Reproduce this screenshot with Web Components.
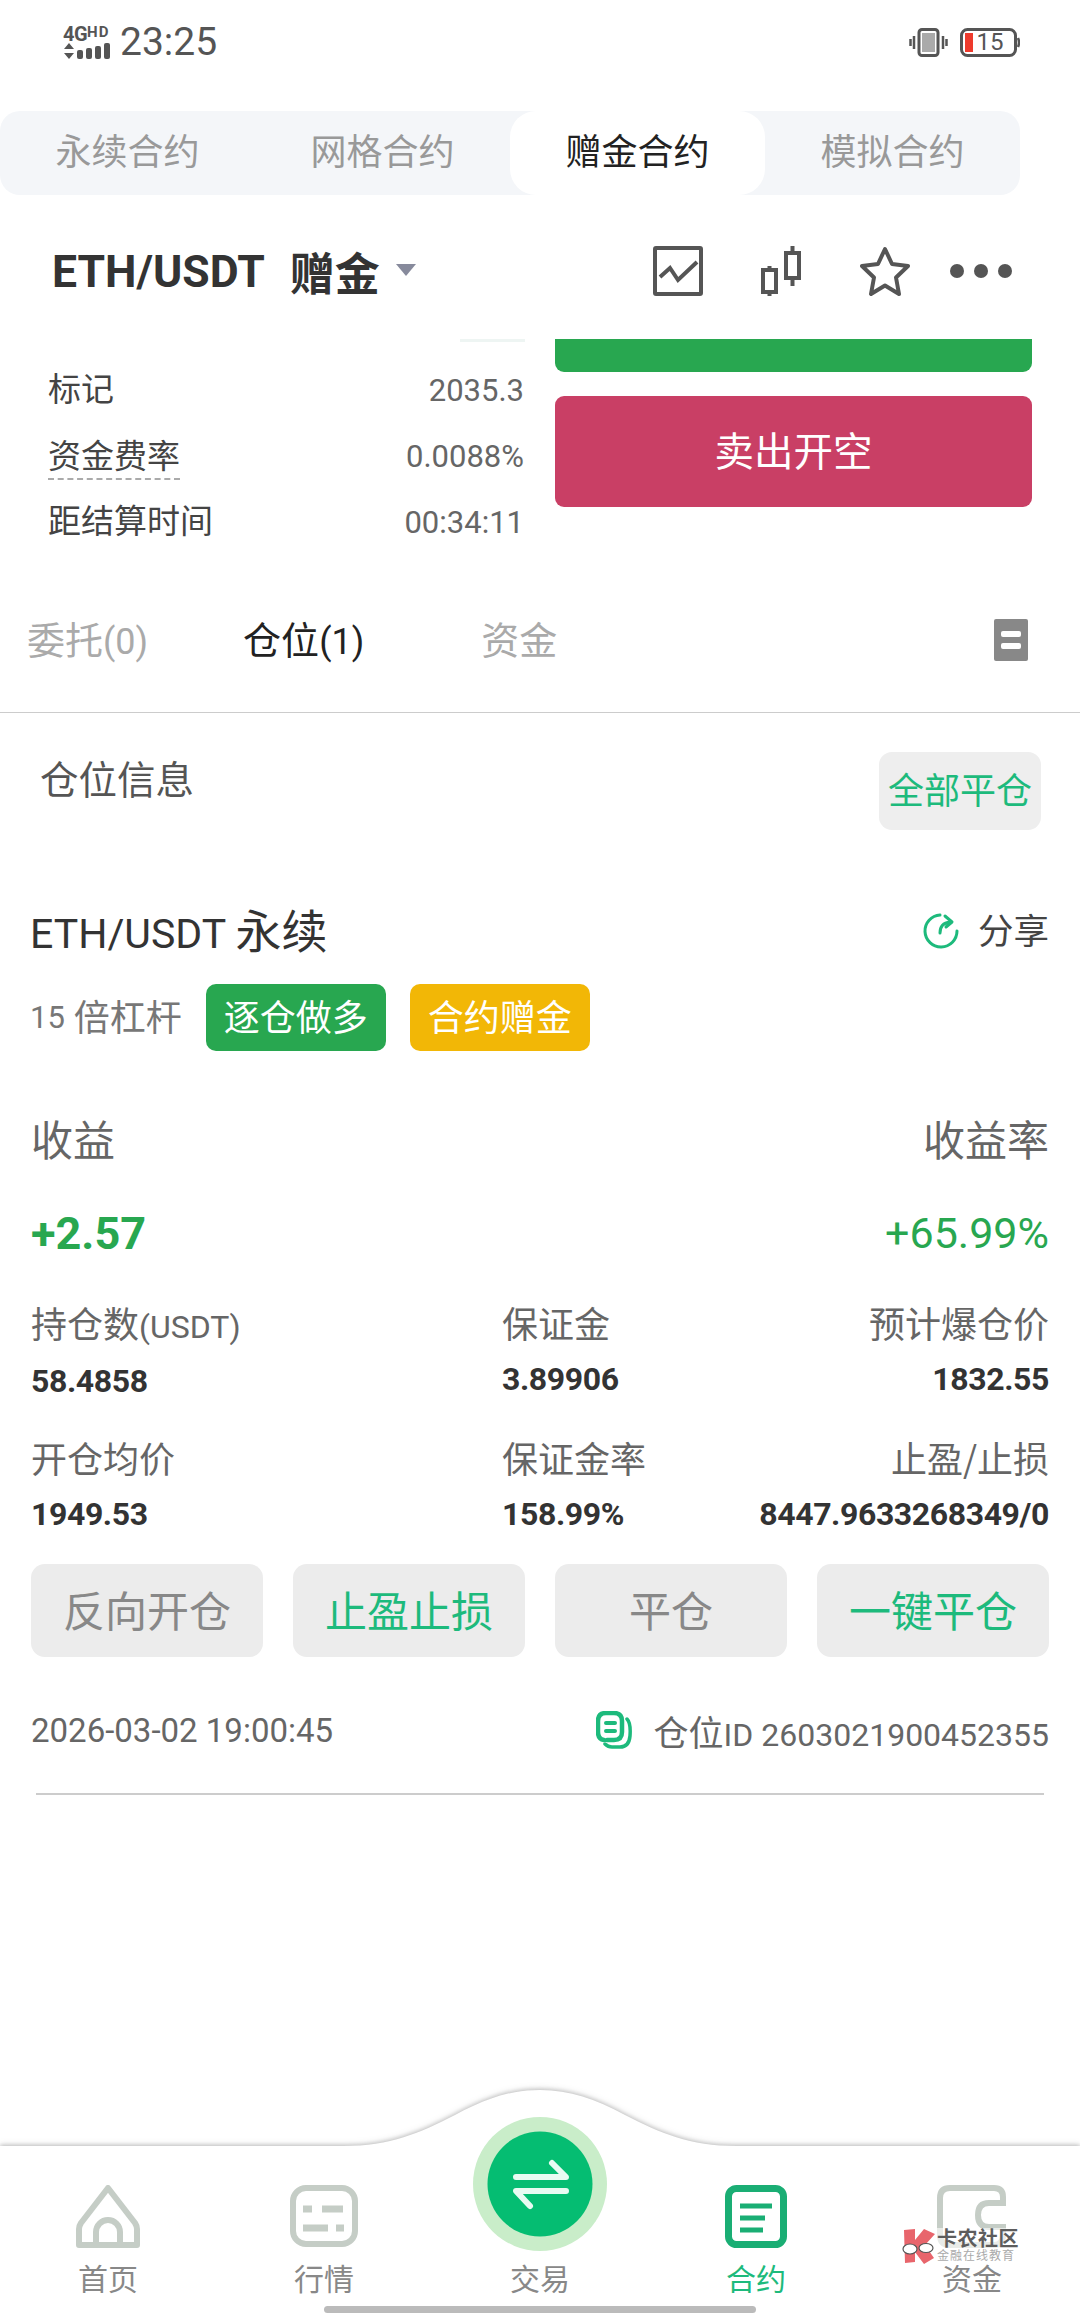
<!DOCTYPE html>
<html lang="zh">
<head>
<meta charset="utf-8">
<style>
  html, body { margin: 0; background: #fff; }
  body { font-family: Roboto, "Noto Sans CJK SC", sans-serif; }
  #page { display: flex; flex-direction: column; width: 1080px; height: 2316px; overflow: hidden; position: relative; }
  nav-bar { margin-top: auto; }
  svg { display: block; }
</style>
</head>
<body>
<div id="page">
  <status-bar></status-bar>
  <contract-tabs></contract-tabs>
  <pair-header></pair-header>
  <trade-panel></trade-panel>
  <order-tabs></order-tabs>
  <info-head></info-head>
  <position-card></position-card>
  <nav-bar>
    <nav-item label="首页">
      <svg slot="icon" width="64" height="63" viewBox="0 0 64 63" fill="none" stroke="#c5cdc6" stroke-width="6" stroke-linejoin="round">
        <path d="M32 3 L5 38 Q3 41 3 44 V60 H61 V44 Q61 41 59 38 Z"/>
        <path d="M20 60 V47 A12 12 0 0 1 44 47 V60"/>
      </svg>
    </nav-item>
    <nav-item label="行情">
      <svg slot="icon" width="68" height="63" viewBox="0 0 68 63" fill="none" stroke="#c5cdc6">
        <rect x="3" y="3" width="62" height="56" rx="13" stroke-width="6"/>
        <path d="M13 24 H22 M32 24 H53 M13 43 H38 M46 43 H54" stroke-width="7"/>
      </svg>
    </nav-item>
    <nav-item label="交易" center>
      <svg slot="icon" width="134" height="134" viewBox="0 0 134 134">
        <circle cx="67" cy="67" r="67" fill="#c9edc9"/>
        <circle cx="67" cy="67" r="52.500" fill="#05bd72"/>
        <path d="M43 60 H93 L79 46 M93 74 H43 L57 89" fill="none" stroke="#e8fbf2" stroke-width="6" stroke-linecap="round" stroke-linejoin="round"/>
      </svg>
    </nav-item>
    <nav-item label="合约" active>
      <svg slot="icon" width="62" height="63" viewBox="0 0 62 63" fill="none" stroke="#1aae74">
        <rect x="3.500" y="3.500" width="55" height="56" rx="8" stroke-width="7"/>
        <path d="M15 21 H47 M15 33 H40 M15 45 H38" stroke-width="5"/>
      </svg>
    </nav-item>
    <nav-item label="资金">
      <svg slot="icon" width="70" height="63" viewBox="0 0 70 63" fill="none" stroke="#c5cdc6" stroke-width="6">
        <path d="M66 18 V12 Q66 3 57 3 H13 Q3 3 3 13 V50 Q3 60 13 60 H57 Q66 60 66 50 V43"/>
        <path d="M69 18 H52 Q41 18 41 30 Q41 42 52 42 H69"/>
      </svg>
    </nav-item>
  </nav-bar>
  <water-mark></water-mark>
</div>

<script>
// tiny helper: every element just gets a shadow root from a string
function shadow(el, css, html) {
  el.attachShadow({mode: 'open'}).innerHTML = `<style>${css}</style>${html}`;
}

customElements.define('status-bar', class extends HTMLElement {
  connectedCallback() {
    shadow(this, `
      :host { display: flex; align-items: center; height: 84px; margin-bottom: 27px; padding: 0 60px 0 63px; color: #555; }
      .net { display: flex; flex-direction: column; width: 48px; margin-right: 9px; }
      .g { font: 700 20px/17px Roboto, sans-serif; white-space: nowrap; letter-spacing: -.5px; }
      .g small { font-size: 15px; vertical-align: 4px; letter-spacing: 1px; }
      .time { font: 400 39px/1 Roboto, sans-serif; }
      .right { margin-left: auto; display: flex; align-items: center; gap: 12px; }
      .bat { display: flex; align-items: center; position: relative; }
      .bat b { position: absolute; left: 12px; right: 12px; top: 0; bottom: 0; font: 400 24px/29px Roboto, sans-serif; text-align: center; }
    `, `
      <div class="net">
        <div class="g">4G<small>HD</small></div>
        <svg width="48" height="17" viewBox="0 0 48 17" fill="#555">
          <path d="M1 6 L6 0 L11 6 Z M1 10 H11 L6 16 Z"/>
          <rect x="14" y="7" width="6" height="9" rx="2"/><rect x="23" y="5" width="6" height="11" rx="2"/>
          <rect x="32" y="3" width="6" height="13" rx="2"/><rect x="41" y="0" width="6" height="16" rx="2"/>
        </svg>
      </div>
      <div class="time">23:25</div>
      <div class="right">
        <svg width="39" height="29" viewBox="0 0 39 29" fill="none">
          <rect x="10" y="1.500" width="19" height="26" rx="3" stroke="#555" stroke-width="3"/>
          <rect x="13" y="5" width="13" height="19" fill="#aaa"/>
          <path d="M5 8 V21 M1.500 11 V18 M34 8 V21 M37.500 11 V18" stroke="#555" stroke-width="2.500"/>
        </svg>
        <div class="bat">
          <svg width="60" height="29" viewBox="0 0 60 29" fill="none">
            <rect x="1.500" y="1.500" width="54" height="26" rx="6" stroke="#555" stroke-width="3"/>
            <rect x="5" y="5" width="8" height="19" fill="#ee3a2c"/>
            <path d="M58 10 Q60 14.500 58 19" stroke="#555" stroke-width="2.500"/>
          </svg>
          <b>15</b>
        </div>
      </div>
    `);
  }
});

customElements.define('contract-tabs', class extends HTMLElement {
  connectedCallback() {
    const names = ['永续合约', '网格合约', '赠金合约', '模拟合约'];
    shadow(this, `
      :host { display: grid; grid-template-columns: repeat(4, 255px); width: 1020px; height: 84px; background: #f4f6f9; border-radius: 20px; }
      div { display: flex; align-items: center; justify-content: center; padding-bottom: 8px; box-sizing: border-box; font: 400 36px "Noto Sans CJK SC", sans-serif; color: #999; }
      .on { background: #fff; color: #222; border-radius: 26px; }
    `, names.map((n, i) => `<div class="${i == 2 ? 'on' : ''}">${n}</div>`).join(''));
  }
});

customElements.define('pair-header', class extends HTMLElement {
  connectedCallback() {
    shadow(this, `
      :host { display: flex; align-items: center; height: 134px; padding: 10px 68px 0 52px; color: #333; }
      .sym { font: 700 44.500px Roboto, sans-serif; }
      .gift { font: 700 45px "Noto Sans CJK SC", sans-serif; margin: 0 0 2px 25px; }
      .caret { width: 0; height: 0; margin: 0 0 4px 16px; border: 10px solid transparent; border-top: 12px solid #878a9c; border-bottom: 0; }
      .icons { margin: 0 0 2px auto; display: flex; align-items: center; }
      svg { display: block; fill: none; stroke: #555; stroke-width: 4; }
    `, `
      <span class="sym">ETH/USDT</span><span class="gift">赠金</span><span class="caret"></span>
      <div class="icons">
        <svg width="50" height="50" viewBox="0 0 50 50" style="margin-right:58px">
          <rect x="2" y="2" width="46" height="46" rx="1"/><path d="M7 31 L17 22 L25 34 L44 16"/>
        </svg>
        <svg width="40" height="50" viewBox="0 0 40 50" style="margin-right:59px">
          <rect x="2" y="24" width="13" height="22"/><rect x="25" y="7" width="13" height="25"/>
          <path d="M8.500 20 V24 M8.500 46 V50 M31.500 0 V7 M31.500 32 V40"/>
        </svg>
        <svg width="50" height="50" viewBox="0 0 50 50" style="margin-right:40px" stroke-linejoin="round">
          <path d="M25 3 L32 18 L48 20 L36 31.500 L39 48 L25 39.500 L11 48 L14 31.500 L2 20 L18 18 Z"/>
        </svg>
        <svg width="62" height="14" viewBox="0 0 62 14" style="fill:#555;stroke:none">
          <circle cx="7" cy="7" r="7"/><circle cx="31" cy="7" r="7"/><circle cx="55" cy="7" r="7"/>
        </svg>
      </div>
    `);
  }
});

customElements.define('trade-panel', class extends HTMLElement {
  connectedCallback() {
    const rows = [['标记', '2035.3'], ['资金费率', '0.0088%', 1], ['距结算时间', '00:34:11']];
    shadow(this, `
      :host { display: flex; height: 241px; padding-left: 48px; overflow: hidden; }
      .left { width: 476px; margin-right: 31px; }
      .strip { width: 65px; height: 3px; margin: 0 0 15px 412px; background: #eef5f3; }
      .row { display: flex; justify-content: space-between; align-items: center; height: 66px; }
      .k { margin-bottom: 6px; font: 400 33px "Noto Sans CJK SC", sans-serif; color: #444; }
      .k.dot { border-bottom: 2px dashed #aaa; line-height: 44px; margin: 0; padding-bottom: 2px; }
      .v { font: 400 31px Roboto, sans-serif; color: #666; }
      .right { width: 477px; }
      .buy { height: 33px; background: #28a750; border-radius: 0 0 9px 9px; }
      .sell { display: flex; align-items: center; justify-content: center; box-sizing: border-box; height: 111px; padding-bottom: 6px; margin-top: 24px; background: #c93f65; border-radius: 9px; color: #fff; font: 400 39.500px "Noto Sans CJK SC", sans-serif; }
    `, `
      <div class="left">
        <div class="strip"></div>
        ${rows.map(r => `<div class="row"><span class="k ${r[2] ? 'dot' : ''}">${r[0]}</span><span class="v">${r[1]}</span></div>`).join('')}
      </div>
      <div class="right"><div class="buy"></div><div class="sell">卖出开空</div></div>
    `);
  }
});

customElements.define('order-tabs', class extends HTMLElement {
  connectedCallback() {
    shadow(this, `
      :host { display: flex; align-items: center; height: 119px; padding: 0 52px 13px 27px; border-bottom: 1.500px solid #ccc; color: #aaa; font: 400 38px "Noto Sans CJK SC", sans-serif; }
      span { margin-bottom: 5px; }
      span small { font: 400 36px Roboto, sans-serif; }
      .on { color: #222; margin-left: 95px; margin-right: 117px; }
      i { margin-left: auto; display: flex; flex-direction: column; justify-content: center; gap: 6px; width: 34px; height: 42px; padding: 0 7px; box-sizing: border-box; background: #888; border-radius: 2px; }
      i::before, i::after { content: ""; height: 6px; background: #fff; border-radius: 2px; }
    `, `<span>委托<small>(0)</small></span><span class="on">仓位<small>(1)</small></span><span>资金</span><i></i>`);
  }
});

customElements.define('info-head', class extends HTMLElement {
  connectedCallback() {
    shadow(this, `
      :host { display: flex; justify-content: space-between; align-items: flex-start; height: 78px; padding: 39px 39px 0 40px; }
      .t { font: 400 38.500px/50px "Noto Sans CJK SC", sans-serif; color: #555; }
      .b { display: flex; align-items: center; justify-content: center; box-sizing: border-box; width: 162px; height: 78px; padding-bottom: 7px; background: #eee; border-radius: 13px; color: #1dba7c; font: 400 36px "Noto Sans CJK SC", sans-serif; }
    `, `<span class="t">仓位信息</span><span class="b">全部平仓</span>`);
  }
});

customElements.define('position-card', class extends HTMLElement {
  connectedCallback() {
    const cjk = '"Noto Sans CJK SC", sans-serif';
    const cells = [
      ['持仓数<small>(USDT)</small>', '58.4858'], ['保证金', '3.89906'], ['预计爆仓价', '1832.55'],
      ['开仓均价', '1949.53'], ['保证金率', '158.99%'], ['止盈/止损', '8447.9633268349/0']
    ];
    shadow(this, `
      :host { display: block; padding: 0 31px; font-family: Roboto, ${cjk}; }
      .title { display: flex; align-items: center; justify-content: space-between; height: 60px; margin-top: 68px; color: #333; }
      .title b { font: 400 41px Roboto, sans-serif; margin-left: -1px; }
      .title b span { font: 400 46px ${cjk}; }
      .share { display: flex; align-items: center; gap: 19px; font: 400 35.500px ${cjk}; color: #444; }
      .share svg { margin-top: 6px; }
      .lev { display: flex; align-items: center; height: 67px; margin-top: 26px; margin-left: -1px; color: #777; font: 400 36px ${cjk}; }
      .lev small { font: 400 31px Roboto, sans-serif; margin-right: 9px; }
      .lev span, .tag { padding-bottom: 5px; box-sizing: border-box; }
      .tag { display: flex; align-items: center; justify-content: center; width: 180px; height: 67px; border-radius: 10px; color: #fff; margin-left: 24px; font-size: 36px; }
      .lev span + .tag { margin-left: 24px; }
      .pair { display: flex; justify-content: space-between; }
      .lbl { height: 56px; margin-top: 58px; align-items: center; color: #666; font: 400 42px ${cjk}; }
      .pnl { height: 60px; margin-top: 38px; align-items: center; color: #28a750; font: 400 43px Roboto, sans-serif; }
      .pnl b { font-size: 45px; }
      .grid { display: grid; grid-template-columns: 471px 1fr auto; row-gap: 34px; margin-top: 37px; }
      .c:nth-child(3n) { text-align: right; }
      .c div { font: 400 36px/44px ${cjk}; color: #666; }
      .c small { font: 400 32px Roboto, sans-serif; }
      .c b { display: block; margin-top: 15px; font: 700 32px/40px Roboto, sans-serif; color: #333; letter-spacing: -.4px; }
      .btns { display: grid; grid-template-columns: repeat(4, 232px); gap: 30px; margin-top: 30px; }
      .btns div { display: flex; align-items: center; justify-content: center; box-sizing: border-box; height: 93px; padding-bottom: 5px; background: #ececec; border-radius: 14px; color: #888; font: 400 42px ${cjk}; }
      .btns .g { color: #1dba7c; }
      .foot { display: flex; align-items: center; height: 60px; margin-top: 43px; color: #666; font: 400 33px Roboto, sans-serif; }
      .foot svg { margin: 0 22px 0 auto; }
      .foot span { font: 400 35px ${cjk}; }
      .foot span em { font: 400 32px Roboto, sans-serif; }
      hr { height: 1.500px; margin: 33px 5px 0; background: #ccc; border: 0; }
      svg { display: block; }
    `, `
      <div class="title">
        <b>ETH/USDT <span>永续</span></b>
        <div class="share">
          <svg width="36" height="36" viewBox="0 0 36 36" fill="none" stroke="#1dba7c" stroke-width="3" stroke-linecap="round" stroke-linejoin="round">
            <path d="M17 2 A16 16 0 1 0 34 18"/>
            <path d="M17 20 Q17 10 27 9 M22 3 L29 9 L23 14"/>
          </svg>
          分享
        </div>
      </div>
      <div class="lev">
        <small>15</small><span>倍杠杆</span>
        <div class="tag" style="background:#28a750">逐仓做多</div>
        <div class="tag" style="background:#f2b706">合约赠金</div>
      </div>
      <div class="pair lbl"><span>收益</span><span>收益率</span></div>
      <div class="pair pnl"><b>+2.57</b><span>+65.99%</span></div>
      <div class="grid">
        ${cells.map(c => `<div class="c"><div>${c[0]}</div><b>${c[1]}</b></div>`).join('')}
      </div>
      <div class="btns">
        <div>反向开仓</div><div class="g">止盈止损</div><div>平仓</div><div class="g">一键平仓</div>
      </div>
      <div class="foot">
        2026-03-02 19:00:45
        <svg width="36" height="38" viewBox="0 0 36 38" fill="none" stroke="#1dba7c" stroke-linecap="round">
          <path d="M8 29 Q2 28 2 21 V10 Q2 2 10 2 H18 Q26 2 26 10 V21 Q26 29 18 29 H11" stroke-width="4.500"/>
          <path d="M10 12 H19 M10 20 H19" stroke-width="4"/>
          <path d="M31 8 Q35 12 34 25 Q33 36 24 36 H16 Q12 36 9 33" stroke-width="3.500"/>
        </svg>
        <span>仓位<em>ID 2603021900452355</em></span>
      </div>
      <hr>
    `);
  }
});

customElements.define('nav-bar', class extends HTMLElement {
  connectedCallback() {
    shadow(this, `
      :host { display: block; position: relative; height: 231px; }
      .hump { position: absolute; left: 0; top: 0; filter: drop-shadow(0 -1px 2px rgba(0,0,0,.18)) drop-shadow(0 -1px 3px rgba(0,0,0,.12)); }
      .items { position: relative; display: grid; grid-template-columns: repeat(5, 216px); padding-top: 100px; }
      .home { position: relative; width: 432px; height: 7px; margin: 10px auto 0; background: #bbb; border-radius: 4px; }
    `, `
      <svg class="hump" width="1080" height="231" viewBox="0 0 1080 231">
        <path fill="#fff" d="M-10 61 H344 C390 61 420 48 455 30 C485 14 510 5 540 5 C570 5 595 14 625 30 C660 48 690 61 736 61 H1090 V240 H-10 Z"/>
      </svg>
      <div class="items"><slot></slot></div>
      <div class="home"></div>
    `);
  }
});

customElements.define('nav-item', class extends HTMLElement {
  connectedCallback() {
    shadow(this, `
      :host { display: flex; flex-direction: column; align-items: center; position: relative; }
      .ic { display: flex; justify-content: center; height: 63px; margin-bottom: 10px; position: relative; }
      :host([center]) ::slotted(svg) { position: absolute; top: -68px; left: -67px; }
      .l { font: 400 30px/38px "Noto Sans CJK SC", sans-serif; color: #888; }
      :host([active]) .l { color: #1dba7c; }
    `, `<div class="ic"><slot name="icon"></slot></div><div class="l">${this.getAttribute('label')}</div>`);
  }
});

customElements.define('water-mark', class extends HTMLElement {
  connectedCallback() {
    shadow(this, `
      :host { position: absolute; left: 899px; top: 2228px; display: flex; width: 120px; height: 36px; background: rgba(255,255,255,.6); }
      .t { font: 700 20px/20px "Noto Sans CJK SC", sans-serif; color: #5d5d5d; letter-spacing: .5px; white-space: nowrap; }
      .s { font: 400 12px/14px "Noto Sans CJK SC", sans-serif; color: #aaa; letter-spacing: 1px; white-space: nowrap; }
    `, `
      <svg width="38" height="37" viewBox="0 0 38 37">
        <path d="M5 2 L16 1 L16 12 L25 1 L36 6 L26 17 L35 30 L25 36 L16 24 L16 34 L6 35 Z" fill="#e8656c"/>
        <ellipse cx="11" cy="21" rx="7" ry="5" fill="#fff" stroke="#555" stroke-width="1.200"/>
        <ellipse cx="27" cy="20" rx="7" ry="4.500" fill="#fff" stroke="#555" stroke-width="1.200"/>
      </svg>
      <div><div class="t">卡农社区</div><div class="s">金融在线教育</div></div>
    `);
  }
});
</script>
</body>
</html>
